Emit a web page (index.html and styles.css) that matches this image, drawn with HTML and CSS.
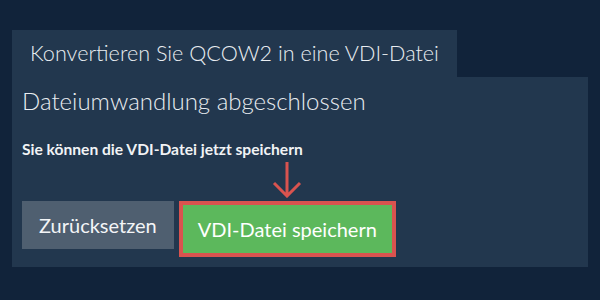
FILE: index.html
```html
<!DOCTYPE html>
<html lang="de">
<head>
    <meta charset="UTF-8">
    <title>QCOW2 in VDI</title>
    <link rel="stylesheet" href="styles.css">
</head>
<body>
    <div class="page">
        <div class="tab">Konvertieren Sie QCOW2 in eine VDI-Datei</div>
        <div class="panel">
            <h1 class="title">Dateiumwandlung abgeschlossen</h1>
            <p class="hint">Sie können die VDI-Datei jetzt speichern</p>
            <div class="actions">
                <button class="btn btn_reset">Zurücksetzen</button>
                <div class="save_wrap">
                    <svg class="arrow" width="30" height="36" viewBox="0 0 30 36">
                        <path d="M15 0 V34 M2 21 L15 34 L28 21" fill="none" stroke="#d9534f" stroke-width="3"/>
                    </svg>
                    <button class="btn btn_save">VDI-Datei speichern</button>
                </div>
            </div>
        </div>
    </div>
</body>
</html>
```

FILE: styles.css
```css
body {
    margin: 0;
    background-color: #11233a;
    font-family: Lato, "Open Sans", sans-serif;
}
.page {
    padding: 30px 12px 0;
}
.tab {
    display: inline-block;
    height: 47px;
    line-height: 47px;
    padding: 0 18px 0 18px;
    background-color: #22374e;
    color: #e9edf1;
    font-size: 21.6px;
    font-weight: 300;
}
.panel {
    background-color: #22374e;
    padding: 10px 10px 10px;
}
.title {
    margin: 0;
    color: #e9edf1;
    font-size: 24px;
    font-weight: 300;
    line-height: 1.2;
}
.hint {
    margin: 24px 0 0;
    color: #f1f3f5;
    font-size: 15.6px;
    font-weight: bold;
    line-height: 1.2;
}
.actions {
    display: flex;
    align-items: flex-start;
    gap: 5px;
    margin-top: 42px;
}
.btn {
    height: 48px;
    border: none;
    margin: 0;
    font-family: Lato, "Open Sans", sans-serif;
    font-size: 20px;
    font-weight: normal;
    color: #f3f5f7;
    cursor: pointer;
}
.btn_reset {
    padding: 0 17px;
    background-color: #4f5f70;
}
.save_wrap {
    position: relative;
}
.arrow {
    position: absolute;
    left: 50%;
    bottom: 100%;
    margin-left: -15px;
    margin-bottom: 3px;
}
.btn_save {
    box-sizing: content-box;
    padding: 0 15px;
    border: 4px solid #d9534f;
    background-color: #5cb85c;
    color: #ffffff;
}
```
